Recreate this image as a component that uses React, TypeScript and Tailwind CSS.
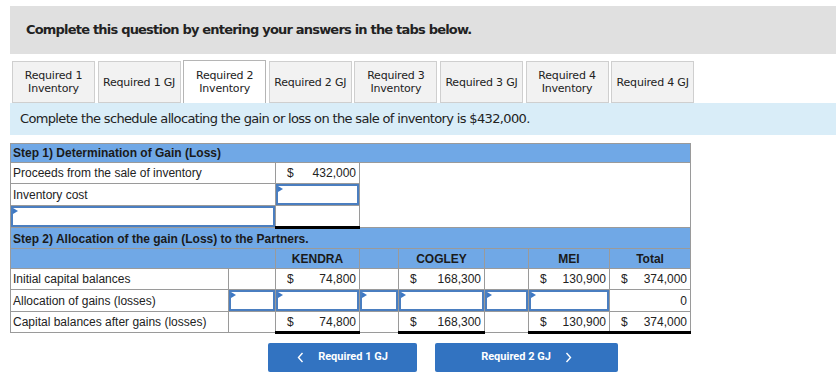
import clsx from "clsx";

const tabs = [
  "Required 1\nInventory",
  "Required 1 GJ",
  "Required 2\nInventory",
  "Required 2 GJ",
  "Required 3\nInventory",
  "Required 3 GJ",
  "Required 4\nInventory",
  "Required 4 GJ",
];

const ACTIVE_TAB = 2;

const cell = "border border-[#9a9a9a] h-[21px] p-0 align-middle";
const blueRow = "bg-[#70a8e6] border border-[#9a9a9a] font-bold text-[#1a1a1a]";

function Flag() {
  return (
    <span className="absolute left-0 top-0 w-0 h-0 border-t-[3px] border-b-[3px] border-l-[5px] border-t-transparent border-b-transparent border-l-[#3d78c4]" />
  );
}

function InputCell({ className, colSpan }: { className?: string; colSpan?: number }) {
  return (
    <td colSpan={colSpan} className={clsx(cell, className)}>
      <div className="relative h-[21px] border-2 border-[#4a7ec0] bg-white">
        <Flag />
      </div>
    </td>
  );
}

function Money({ value, total }: { value: string; total?: boolean }) {
  return (
    <td
      className={clsx(
        cell,
        total && "border-t-black border-b-[3px] border-b-black",
      )}
    >
      <div className="flex justify-between pl-[11px] pr-[3px]">
        <span>$</span>
        <span>{value}</span>
      </div>
    </td>
  );
}

export default function App() {
  return (
    <div className="w-[836px] h-[389px] bg-white pl-[10px] pt-[6px] text-[#222]">
      {/* Instruction banner */}
      <div className="h-[48px] bg-[#e0e0e0] flex items-center pl-[16px] font-['DejaVu_Sans',sans-serif] font-bold text-[13px] tracking-[-0.8px]">
        Complete this question by entering your answers in the tabs below.
      </div>

      {/* Tabs */}
      <div className="flex items-end h-[49px] pl-[2px] font-['DejaVu_Sans',sans-serif] text-[11px] leading-[13px] tracking-[-0.2px]">
        {tabs.map((t, i) => (
          <div
            key={t}
            className={clsx(
              "w-[83px] mr-[2.6px] flex items-center justify-center text-center whitespace-pre border",
              i === ACTIVE_TAB
                ? "h-[43px] bg-white border-[#b5b5b5] border-b-0"
                : "h-[42px] bg-[#f2f2f2] border-[#cfcfcf]",
            )}
          >
            {t}
          </div>
        ))}
      </div>

      {/* Question prompt */}
      <div className="h-[32px] bg-[#d9edf8] flex items-center pl-[10px] font-['DejaVu_Sans',sans-serif] text-[13px] tracking-[-0.65px]">
        Complete the schedule allocating the gain or loss on the sale of inventory is $432,000.
      </div>

      {/* Schedule */}
      <table className="mt-[8px] w-[680px] table-fixed border-collapse font-['Liberation_Sans',Arial,sans-serif] text-[12px] text-[#222]">
        <colgroup>
          <col className="w-[218px]" />
          <col className="w-[47px]" />
          <col className="w-[84px]" />
          <col className="w-[39px]" />
          <col className="w-[86px]" />
          <col className="w-[44px]" />
          <col className="w-[81px]" />
          <col className="w-[81px]" />
        </colgroup>
        <tbody>
          <tr>
            <td colSpan={8} className={clsx(blueRow, "h-[19px] pl-[2px]")}>
              Step 1) Determination of Gain (Loss)
            </td>
          </tr>
          <tr>
            <td colSpan={2} className={clsx(cell, "pl-[2px]")}>
              Proceeds from the sale of inventory
            </td>
            <Money value="432,000" />
            <td colSpan={5} rowSpan={3} className="border-r border-[#9a9a9a] p-0" />
          </tr>
          <tr>
            <td colSpan={2} className={clsx(cell, "pl-[2px]")}>
              Inventory cost
            </td>
            <InputCell />
          </tr>
          <tr>
            <InputCell colSpan={2} />
            <td className={clsx(cell, "border-t-black border-b-[3px] border-b-black")} />
          </tr>
          <tr>
            <td colSpan={8} className={clsx(blueRow, "h-[21px] pl-[2px]")}>
              Step 2) Allocation of the gain (Loss) to the Partners.
            </td>
          </tr>
          <tr className="text-center">
            <td colSpan={2} className={clsx(blueRow, "h-[20px]")} />
            <td className={blueRow}>KENDRA</td>
            <td className={blueRow} />
            <td className={blueRow}>COGLEY</td>
            <td className={blueRow} />
            <td className={blueRow}>MEI</td>
            <td className={blueRow}>Total</td>
          </tr>
          <tr>
            <td className={clsx(cell, "pl-[2px]")}>Initial capital balances</td>
            <td className={cell} />
            <Money value="74,800" />
            <td className={cell} />
            <Money value="168,300" />
            <td className={cell} />
            <Money value="130,900" />
            <Money value="374,000" />
          </tr>
          <tr>
            <td className={clsx(cell, "pl-[2px]")}>Allocation of gains (losses)</td>
            <InputCell />
            <InputCell />
            <InputCell />
            <InputCell />
            <InputCell />
            <InputCell />
            <td className={clsx(cell, "text-right pr-[3px]")}>0</td>
          </tr>
          <tr>
            <td className={clsx(cell, "pl-[2px]")}>Capital balances after gains (losses)</td>
            <td className={cell} />
            <Money value="74,800" total />
            <td className={cell} />
            <Money value="168,300" total />
            <td className={cell} />
            <Money value="130,900" total />
            <Money value="374,000" total />
          </tr>
        </tbody>
      </table>

      {/* Navigation */}
      <div className="flex gap-[18px] pl-[258px] mt-[9px] font-['Roboto',sans-serif] font-bold text-[11px] text-white">
        <button className="w-[149px] h-[29px] rounded-[2px] bg-[#3273c1] flex items-center justify-center gap-[14px]">
          <svg width="7" height="11" viewBox="0 0 7 11" fill="none" stroke="white" strokeWidth="1.4">
            <path d="M5.5 1 1.5 5.5 5.5 10" />
          </svg>
          Required 1 GJ
        </button>
        <button className="w-[183px] h-[29px] rounded-[2px] bg-[#3273c1] flex items-center justify-center gap-[14px]">
          Required 2 GJ
          <svg width="7" height="11" viewBox="0 0 7 11" fill="none" stroke="white" strokeWidth="1.4">
            <path d="M1.5 1 5.5 5.5 1.5 10" />
          </svg>
        </button>
      </div>
    </div>
  );
}
